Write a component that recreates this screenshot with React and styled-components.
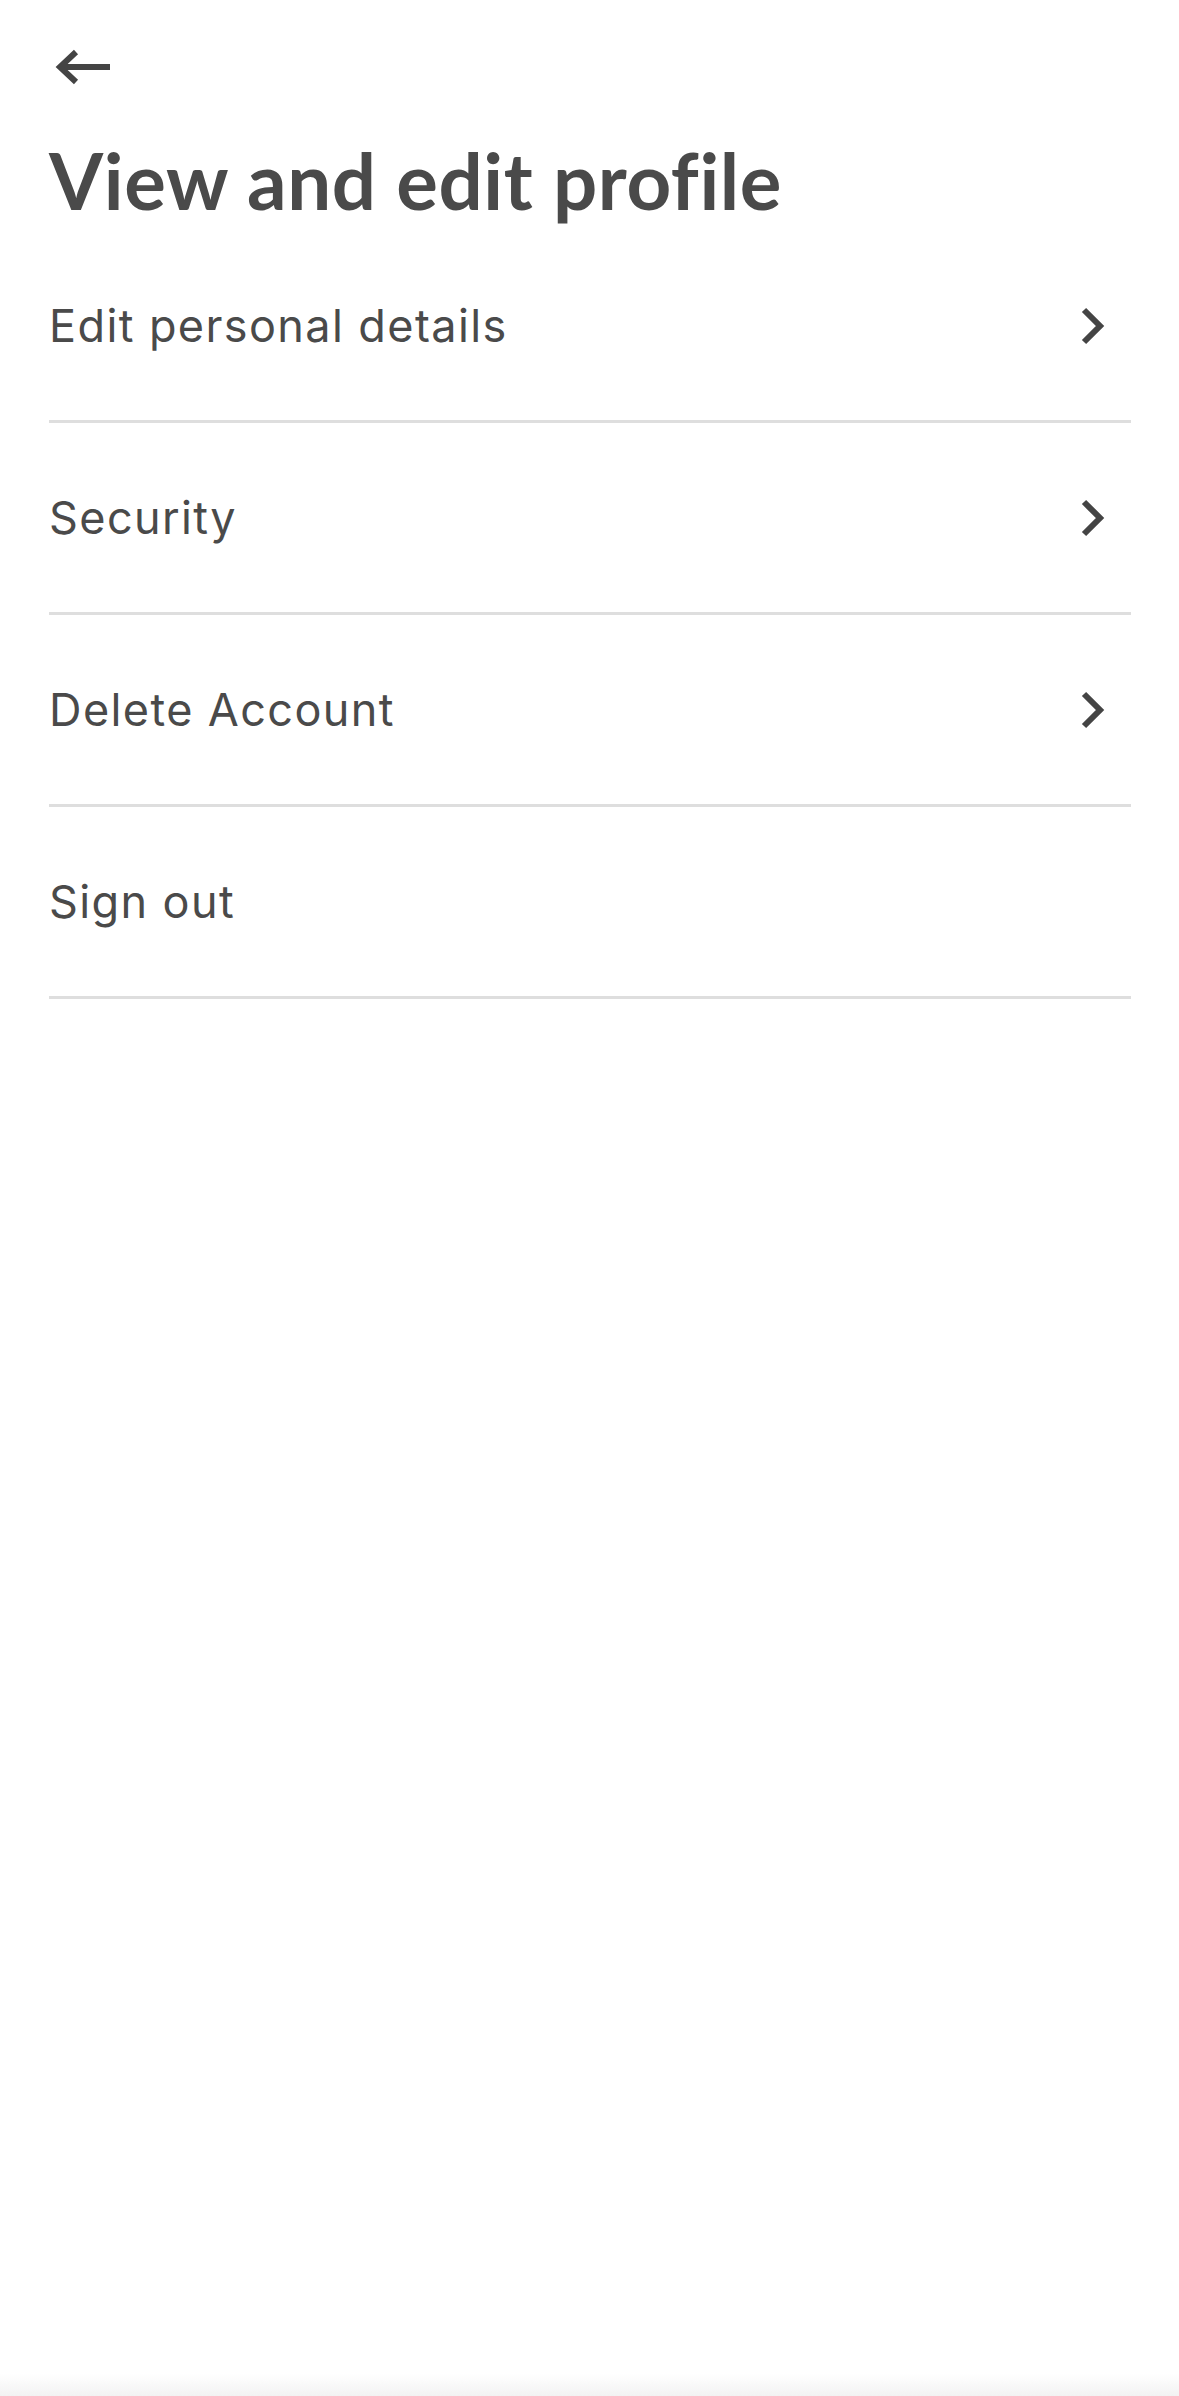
import React from "react";
import styled, { createGlobalStyle } from "styled-components";

const GlobalStyle = createGlobalStyle`
    html, body {
        margin: 0;
        padding: 0;
        background: #fff;
    }
    * {
        box-sizing: border-box;
    }
`;

const Page = styled.div`
    display: flex;
    flex-direction: column;
    min-height: 100vh;
    background: #fff;
    color: #4a4a4a;
`;

const Content = styled.div`
    padding: 0 48px 0 49px;
`;

const BackButton = styled.button`
    display: block;
    margin: 49px 0 0 6px;
    padding: 0;
    border: none;
    background: none;
    width: 56px;
    height: 36px;
    cursor: pointer;
`;

const Title = styled.h1`
    margin: 0;
    height: 146px;
    padding-top: 56px;
    font-family: "Lato", "Liberation Sans", sans-serif;
    font-weight: 700;
    font-size: 78px;
    line-height: 78px;
    letter-spacing: 0.6px;
    color: #4a4a4a;
`;

const MenuList = styled.ul`
    list-style: none;
    margin: 0;
    padding: 0;
`;

const MenuRow = styled.li`
    display: flex;
    align-items: center;
    justify-content: space-between;
    height: 192px;
    border-bottom: 3px solid #dedede;
    cursor: pointer;
`;

const RowLabel = styled.span`
    font-family: "Inter", "Roboto", "Liberation Sans", sans-serif;
    font-size: 45px;
    font-weight: 400;
    letter-spacing: 1.4px;
    color: #4a4a4a;
`;

const Chevron = styled.svg`
    width: 24px;
    height: 38px;
    margin-right: 26px;
    flex-shrink: 0;
`;

const BottomFade = styled.div`
    margin-top: auto;
    height: 22px;
    background: linear-gradient(to bottom, rgba(242, 242, 242, 0), #f2f2f2);
`;

const items = [
    { label: "Edit personal details", arrow: true },
    { label: "Security", arrow: true },
    { label: "Delete Account", arrow: true },
    { label: "Sign out", arrow: false },
];

function App() {
    return (
        <Page>
            <GlobalStyle />
            <Content>
                <BackButton aria-label="Back">
                    <svg width="56" height="36" viewBox="0 0 56 36" fill="none">
                        <path d="M4 18 H55" stroke="#444" strokeWidth="6" />
                        <path d="M21 3 L5 18 L21 33" stroke="#444" strokeWidth="6" />
                    </svg>
                </BackButton>
                <Title>View and edit profile</Title>
                <MenuList>
                    {items.map((item) => (
                        <MenuRow key={item.label}>
                            <RowLabel>{item.label}</RowLabel>
                            {item.arrow && (
                                <Chevron viewBox="0 0 24 38" fill="none">
                                    <path d="M3 3 L19 19 L3 35" stroke="#444" strokeWidth="6" />
                                </Chevron>
                            )}
                        </MenuRow>
                    ))}
                </MenuList>
            </Content>
            <BottomFade />
        </Page>
    );
}

export default App;
